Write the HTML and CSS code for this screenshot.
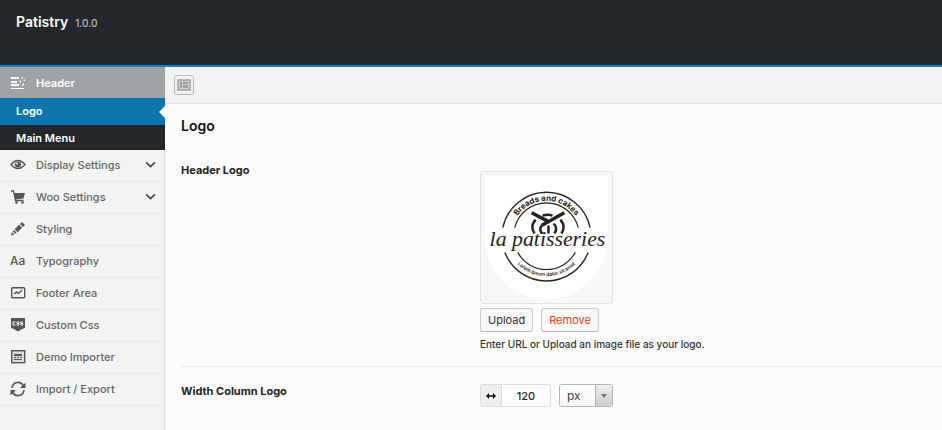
FILE: index.html
```html
<!DOCTYPE html>
<html lang="en">
<head>
<meta charset="utf-8">
<meta name="viewport" content="width=device-width, initial-scale=1">
<title>Patistry</title>
<link rel="stylesheet" href="styles.css">
</head>
<body>
<header class="topbar"><h1 class="brand">Patistry</h1><span class="version">1.0.0</span></header>
<div class="layout">
  <nav class="sidebar" aria-label="Sections">
    <a class="item current" href="#header">
      <svg class="icon" viewBox="0 0 16 16"><path d="M1 2h8v2H1zM1 6h6v2H1zM1 9h8v2H1zM1 13h13v1H1zM11 3l2-1v2zM9 7l2-2v3zM13 6l2-2v2zM12 10l2-2v3z" fill="currentColor"/></svg>
      <span>Header</span></a>
    <a class="sub active" href="#logo">Logo</a>
    <a class="sub" href="#menu">Main Menu</a>
    <a class="item" href="#display">
      <svg class="icon" viewBox="0 0 16 16"><path d="M1 7.500Q8-.5 15 7.500Q8 15.500 1 7.500Z" fill="none" stroke="currentColor" stroke-width="1.500"/><circle cx="8" cy="7.500" r="3" fill="currentColor"/><circle cx="7" cy="6.500" r="1" fill="#f3f3f3"/></svg>
      <span>Display Settings</span>
      <svg class="chevron" viewBox="0 0 10 10"><path d="M1 3l4 4 4-4" fill="none" stroke="currentColor" stroke-width="1.500"/></svg></a>
    <a class="item" href="#woo">
      <svg class="icon" viewBox="0 0 16 16"><path d="M1 2h2.500l2 9.500h8" fill="none" stroke="currentColor" stroke-width="1.300"/><path d="M4 4h11l-1.500 5.500-8.500 1z" fill="currentColor"/><circle cx="6.500" cy="13.500" r="1.300" fill="currentColor"/><circle cx="12.500" cy="13.500" r="1.300" fill="currentColor"/></svg>
      <span>Woo Settings</span>
      <svg class="chevron" viewBox="0 0 10 10"><path d="M1 3l4 4 4-4" fill="none" stroke="currentColor" stroke-width="1.500"/></svg></a>
    <a class="item" href="#styling">
      <svg class="icon" viewBox="0 0 16 16"><path d="M1 14.500l1-3.500 2.500 2.500zM2.700 10.200l2.600 2.600 1.200-1.200-2.600-2.600zM4.600 8.300l3 3 4.500-4.500-3-3zM10 3l3 3L15 4l-3-3z" fill="currentColor"/></svg>
      <span>Styling</span></a>
    <a class="item" href="#typography"><span class="icon aa">Aa</span><span>Typography</span></a>
    <a class="item" href="#footer">
      <svg class="icon" viewBox="0 0 16 16"><rect x="1.700" y="2.700" width="13" height="10" rx="1" fill="none" stroke="currentColor" stroke-width="1.400"/><path d="M4 9l2.500-2 2 1.500L12 5" fill="none" stroke="currentColor" stroke-width="1.400"/></svg>
      <span>Footer Area</span></a>
    <a class="item" href="#css">
      <svg class="icon" viewBox="0 0 16 16"><path d="M1 1h14v10l-3 1-4 2.500L4 12l-3-1z" fill="currentColor"/><path d="M5.500 5H3v3h2.500M9.300 5H7v1.500h2V8H6.700M13 5h-2.300v1.500h2V8h-2.300" fill="none" stroke="#fff"/></svg>
      <span>Custom Css</span></a>
    <a class="item" href="#demo">
      <svg class="icon" viewBox="0 0 16 16"><rect x="1.700" y="1.700" width="13" height="12" fill="#ddd" stroke="currentColor" stroke-width="1.400"/><path d="M4 5h8v2H4zM4 8h2v1H4zM7 8h2v1H7zM10 8h2v1h-2zM4 10h8v1H4z" fill="currentColor"/></svg>
      <span>Demo Importer</span></a>
    <a class="item" href="#import">
      <svg class="icon" viewBox="0 0 16 16"><path d="M2 7C3 0 11 0 13.500 5M14 9C13 16 5 16 2.500 11" fill="none" stroke="currentColor" stroke-width="1.700"/><path d="M15.500 1.500V7H10zM.5 14.500V9H6z" fill="currentColor"/></svg>
      <span>Import / Export</span></a>
  </nav>
  <main class="main">
    <div class="toolbar">
      <button class="expand" type="button" aria-label="Expand all">
        <svg viewBox="0 0 14 14"><path d="M1 2h12v10H1z" fill="#d0d0d0" stroke="#a2a2a2" stroke-width="1.500"/><path d="M3 4h2v6H3zM6 4h5v2H6zM6 7h5v3H6z" fill="#a2a2a2"/></svg>
      </button>
    </div>
    <section class="panel">
      <h2 class="title">Logo</h2>
      <div class="field">
        <h3 class="label">Header Logo</h3>
        <div>
          <div class="preview">
            <svg class="logo" viewBox="0 0 124 124" role="img" aria-label="la patisseries">
              <path d="M0 0h124v62a62 62 0 0 1-124 0z" fill="#fff"/>
              <defs><path id="arc-top" d="M26 61a36 36 0 0 1 72 0"/><path id="arc-bottom" d="M21 60a41 41 0 0 0 82 0"/></defs>
              <g fill="none" stroke="#252220">
                <path d="M18 52a45 45 0 0 1 88 0M20 77a45 45 0 0 0 84 0" stroke-width="1.400"/>
                <path d="M30 52a33 33 0 0 1 64 0M33 77a33 33 0 0 0 58 0" stroke-width="1.200"/>
                <path d="M47 37l17 9M80 37L57 50" stroke-width="3.500"/>
                <path d="M51 44Q45 51 50 58M76 44Q82 51 77 58M58 40q5-2 10 0M57 50q-3 5 1 8M69 48q5 4 1 10M64 50v8" stroke-width="2.500"/>
              </g>
              <text class="ring-top"><textPath href="#arc-top" startOffset="50%">Breads and cakes</textPath></text>
              <text class="ring-bottom"><textPath href="#arc-bottom" startOffset="50%">Lorem ipsum dolor sit amet</textPath></text>
              <text class="script" x="63" y="71">la patisseries</text>
            </svg>
          </div>
          <div class="buttons"><button class="button" type="button">Upload</button><button class="button remove" type="button">Remove</button></div>
          <p class="hint">Enter URL or Upload an image file as your logo.</p>
        </div>
      </div>
      <div class="field second">
        <label class="label" for="width">Width Column Logo</label>
        <div class="dimensions">
          <div class="number">
            <span class="prefix"><svg viewBox="0 0 12 8"><path d="M3 4h6" stroke="#111" stroke-width="1.500"/><path d="M1 4l3-3v6zM11 4L8 1v6z" fill="#111"/></svg></span>
            <input id="width" type="text" value="120">
          </div>
          <div class="unit"><select aria-label="Unit"><option>px</option></select><span class="arrow"></span></div>
        </div>
      </div>
    </section>
  </main>
</div>
</body>
</html>
```

FILE: styles.css
```css
* { box-sizing: border-box; }
body { margin: 0; font: 12px/16px Inter, "Liberation Sans", sans-serif; color: #222; background: #fcfcfc; }
h1, h2, h3, p { margin: 0; }
a { text-decoration: none; }
button, input, select { font: inherit; }

.topbar { display: flex; align-items: baseline; gap: 7px; min-height: 67px; padding: 14px 16px; background: #23282d; border-bottom: 2px solid #1680bd; }
.brand { font-size: 14px; line-height: 16px; font-weight: 600; color: #fff; }
.version { font-size: 10px; font-weight: 500; color: #b4b9be; }

.layout { display: flex; min-height: calc(100vh - 67px); }
.sidebar { flex: 0 0 165px; background: #f3f3f3; border-right: 1px solid #dedede; }
.item { display: flex; align-items: center; gap: 10px; height: 32px; padding: 0 8px 2px 10px; font-size: 11px; font-weight: 500; color: #666; border-bottom: 1px solid #e9e9e9; }
.item.current { height: 31px; margin-right: -1px; padding-bottom: 0; color: #fff; background: #9fa3a7; border: 0; font-weight: 600; }
.icon { flex: none; width: 16px; height: 16px; color: #555; }
.current .icon { color: #fff; }
.aa { font-size: 12px; font-weight: 500; }
.chevron { width: 11px; height: 11px; margin-left: auto; color: #444; }
.sub { position: relative; display: block; height: 25px; margin-right: -1px; padding: 5px 16px; font-size: 11px; font-weight: 600; color: #fff; background: #23282d; }
.sub.active { height: 27px; background: #0f75ae; }
.sub.active::after { content: ""; position: absolute; top: 8px; right: 0; border: 6px solid transparent; border-left: 0; border-right-color: #fcfcfc; }

.main { flex: 1; min-width: 0; }
.toolbar { height: 37px; padding: 8px 9px; background: #f2f2f2; border-bottom: 1px solid #e3e3e3; }
.expand { display: grid; place-items: center; width: 20px; height: 20px; padding: 0; background: #f2f2f2; border: 1px solid #b9b9b9; border-radius: 3px; }
.expand svg { width: 14px; height: 14px; }
.panel { padding: 13px 0 0 16px; }
.title { font-size: 14px; line-height: 18px; font-weight: 600; color: #111; }
.field { display: grid; grid-template-columns: 299px 1fr; padding: 36px 0 14px; }
.label { margin-top: -9px; font-size: 11px; line-height: 16px; font-weight: 700; color: #222; }
.preview { width: 133px; padding: 4px; background: #f7f7f7; border: 1px solid #e3e3e3; border-radius: 3px; }
.logo { display: block; width: 100%; height: auto; }
.logo text { fill: #252220; text-anchor: middle; }
.ring-top { font-size: 8px; font-weight: 700; }
.ring-bottom { font-size: 5px; font-weight: 600; }
.logo .script { font: italic 22px "Liberation Serif", serif; }
.buttons { display: flex; gap: 8px; margin-top: 4px; }
.button { height: 24px; padding: 0 7px; font-size: 11px; font-weight: 400; color: #333; background: #f8f8f8; border: 1px solid #ccc; border-bottom-color: #b5b5b5; border-radius: 3px; }
.remove { color: #f03c20; }
.hint { margin-top: 4px; font-size: 10px; font-weight: 500; color: #333; }
.second { padding: 17px 0; border-top: 1px solid #ebebeb; }
.second .label { margin-top: -1px; }
.dimensions { display: flex; gap: 8px; }
.number { display: flex; width: 71px; height: 23px; background: #fff; border: 1px solid #ddd; border-radius: 3px; }
.prefix { display: grid; place-items: center; flex: 0 0 21px; background: #eee; border-right: 1px solid #ddd; }
.prefix svg { width: 12px; height: 8px; }
.number input { width: 100%; min-width: 0; padding: 0; text-align: center; font-size: 11px; font-weight: 500; color: #222; background: transparent; border: 0; }
.unit { position: relative; width: 54px; height: 23px; overflow: hidden; border: 1px solid #b5b5b5; border-radius: 3px; }
.unit select { width: 100%; height: 100%; padding: 0 7px; font-size: 12px; color: #444; appearance: none; border: 0; background: linear-gradient(#fff, #f5f5f5); }
.arrow { position: absolute; top: 0; right: 0; bottom: 0; display: grid; place-items: center; width: 17px; background: linear-gradient(#eee, #ccc); border-left: 1px solid #b5b5b5; pointer-events: none; }
.arrow::after { content: ""; border: 3px solid transparent; border-top: 4px solid #777; border-bottom: 0; }
```
